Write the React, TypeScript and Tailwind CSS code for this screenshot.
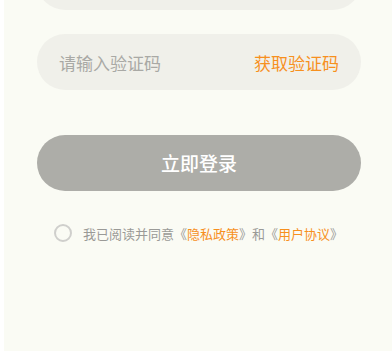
import React from 'react';

const font = { fontFamily: '"Noto Sans CJK SC", "Noto Sans", sans-serif' };

export default function App() {
    return (
        <div className="w-[392px] h-[351px] overflow-hidden bg-white pl-[4px]" style={font}>
            <div className="h-full bg-[#fafbf4] pl-[33px] pr-[31px] flex flex-col">
                {/* phone field, scrolled mostly out of view */}
                <div className="-mt-[46px] h-[56px] shrink-0 rounded-full bg-[#f0f0ea]"></div>

                <div className="mt-[24px] h-[56px] shrink-0 rounded-full bg-[#f0f0ea] flex items-center justify-between pl-[22px] pr-[22px]">
                    <span className="text-[17px] text-[#a9a9a5] leading-none">请输入验证码</span>
                    <span className="text-[17px] text-[#f7901e] leading-none">获取验证码</span>
                </div>

                <button className="mt-[45px] w-full h-[56px] shrink-0 rounded-full bg-[#adada8] text-white text-[19px] font-medium flex items-center justify-center">
                    立即登录
                </button>

                <div className="mt-[33px] flex items-center pl-[17px]">
                    <div className="w-[18px] h-[18px] rounded-full border-2 border-[#cfcfcc]"></div>
                    <p className="ml-[11px] text-[13px] text-[#9a9a97] leading-none">
                        我已阅读并同意《<span className="text-[#f7901e]">隐私政策</span>》和《<span className="text-[#f7901e]">用户协议</span>》
                    </p>
                </div>
            </div>
        </div>
    );
}
